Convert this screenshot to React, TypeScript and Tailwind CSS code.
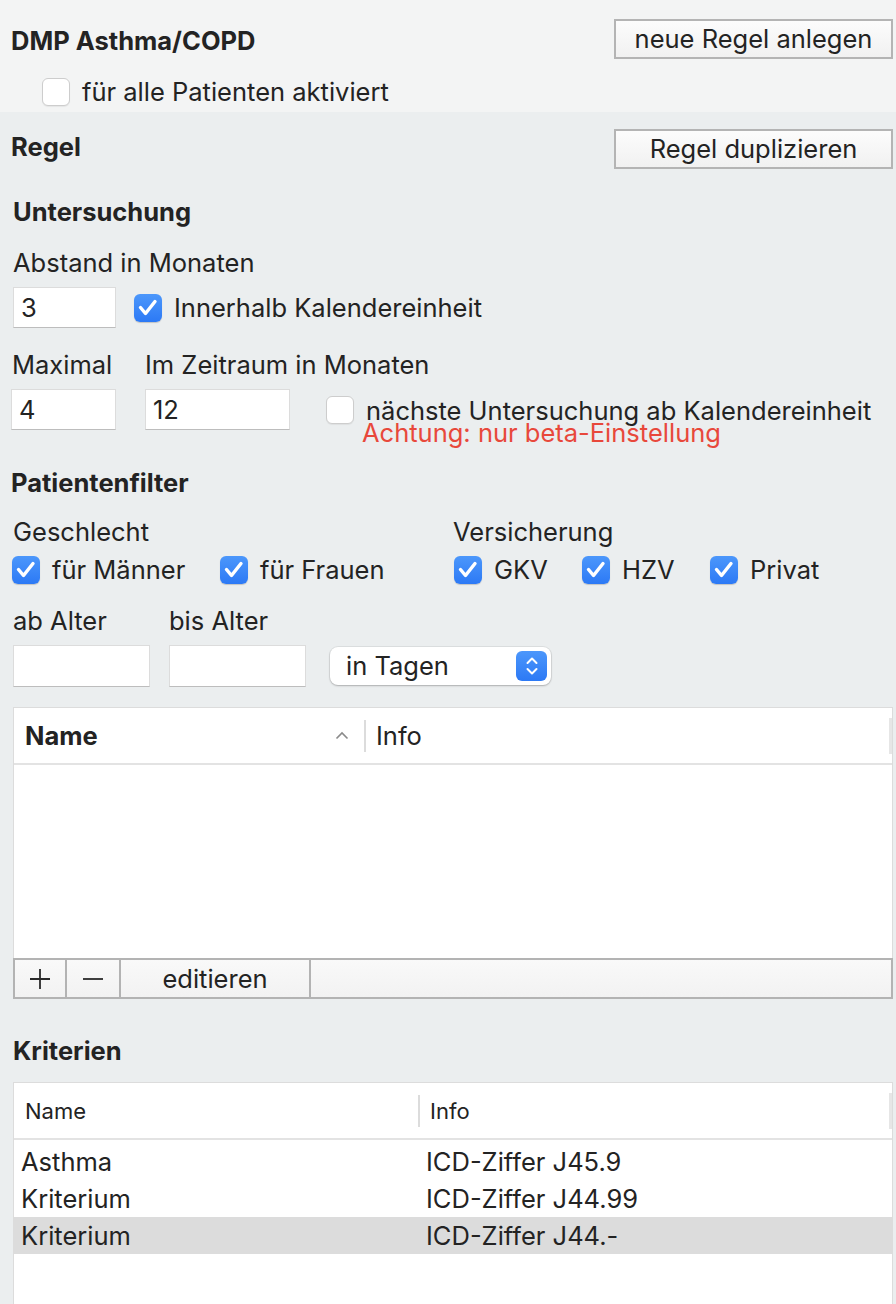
import React from 'react';

function Box({ checked }: { checked?: boolean }) {
  if (checked) {
    return (
      <span className="flex h-[28px] w-[28px] shrink-0 items-center justify-center rounded-[6px] bg-linear-to-b from-[#4c97fb] to-[#2c79f5] shadow-[0_1px_1px_rgba(0,0,0,0.18)]">
        <svg width="28" height="28" viewBox="0 0 28 28">
          <path d="M6.5 13.5 L11.5 19.5 L21 7.5" fill="none" stroke="white" strokeWidth="3.4" strokeLinecap="round" strokeLinejoin="round" />
        </svg>
      </span>
    );
  }
  return <span className="block h-[28px] w-[28px] shrink-0 rounded-[6px] border border-[#cdcdcd] bg-white shadow-[0_1px_1px_rgba(0,0,0,0.06)]" />;
}

function Btn({ children }: { children: React.ReactNode }) {
  return (
    <div className="flex h-[40px] w-[279px] items-center justify-center border-2 border-[#b4b4b4] bg-linear-to-b from-[#fcfcfc] to-[#f1f1f1]">
      {children}
    </div>
  );
}

function Check({ label }: { label: string }) {
  return (
    <div className="flex items-center gap-[12px]">
      <Box checked />
      <span>{label}</span>
    </div>
  );
}

const field = 'flex h-[41px] shrink-0 items-center border border-[#dcdcdc] border-b-[#bdbdbd] bg-white pl-[7px]';

export default function App() {
  return (
    <div className="h-[1304px] w-[896px] overflow-hidden bg-[#ebeeef] font-[Inter,'Noto_Sans',sans-serif] text-[25.5px] leading-[30px] text-[#232323]">
      {/* header */}
      <div className="h-[112px] bg-[#f3f4f4] pl-[11px] pr-[3px] pt-[19px]">
        <div className="flex h-[40px] items-center justify-between">
          <div className="mt-[4px] font-bold">DMP Asthma/COPD</div>
          <Btn>neue Regel anlegen</Btn>
        </div>
        <div className="ml-[31px] mt-[18px] flex items-center gap-[12px]">
          <Box />
          <span>für alle Patienten aktiviert</span>
        </div>
      </div>

      {/* Regel */}
      <div className="pl-[11px] pr-[3px] pt-[17px]">
        <div className="flex h-[40px] items-center justify-between">
          <div className="mb-[4px] font-bold">Regel</div>
          <Btn>Regel duplizieren</Btn>
        </div>
      </div>

      <div className="ml-[13px] mt-[28px] h-[30px] font-bold">Untersuchung</div>
      <div className="ml-[13px] mt-[21px] h-[30px]">Abstand in Monaten</div>
      <div className="ml-[13px] mt-[9px] flex h-[41px] items-center">
        <div className={field + ' w-[103px]'}>3</div>
        <div className="ml-[18px] flex items-center gap-[12px]">
          <Box checked />
          <span>Innerhalb Kalendereinheit</span>
        </div>
      </div>

      <div className="ml-[12px] mt-[22px] flex h-[30px]">
        <span className="w-[133px]">Maximal</span>
        <span>Im Zeitraum in Monaten</span>
      </div>
      <div className="ml-[11px] mt-[9px] flex h-[41px] items-start">
        <div className={field + ' w-[105px]'}>4</div>
        <div className={field + ' ml-[29px] w-[145px]'}>12</div>
        <div className="ml-[36px] mt-[7px] shrink-0">
          <Box />
        </div>
        <div className="ml-[12px] shrink-0 whitespace-nowrap pt-[9px]">
          <div className="h-[26px] leading-[26px]">nächste Untersuchung ab Kalendereinheit</div>
          <div className="-ml-[4px] h-[18px] leading-[18px] text-[#e8483b]">Achtung: nur beta-Einstellung</div>
        </div>
      </div>

      {/* Patientenfilter */}
      <div className="ml-[11px] mt-[38px] h-[30px] font-bold">Patientenfilter</div>
      <div className="ml-[13px] mt-[19px] flex h-[30px]">
        <span className="w-[440px]">Geschlecht</span>
        <span>Versicherung</span>
      </div>
      <div className="ml-[12px] mt-[9px] flex h-[28px] items-center">
        <div className="w-[208px]"><Check label="für Männer" /></div>
        <div className="w-[234px]"><Check label="für Frauen" /></div>
        <div className="w-[128px]"><Check label="GKV" /></div>
        <div className="w-[128px]"><Check label="HZV" /></div>
        <Check label="Privat" />
      </div>

      <div className="ml-[13px] mt-[22px] flex h-[30px]">
        <span className="w-[156px]">ab Alter</span>
        <span>bis Alter</span>
      </div>
      <div className="ml-[13px] mt-[9px] flex h-[42px] items-center">
        <div className="h-[42px] w-[137px] border border-[#dcdcdc] border-b-[#bdbdbd] bg-white" />
        <div className="ml-[19px] h-[42px] w-[137px] border border-[#dcdcdc] border-b-[#bdbdbd] bg-white" />
        <div className="ml-[24px] flex h-[38px] w-[221px] items-center justify-between rounded-[8px] bg-white pl-[16px] pr-[4px] shadow-[0_0_0_1px_rgba(0,0,0,0.06),0_1px_2px_rgba(0,0,0,0.22)]">
          <span>in Tagen</span>
          <span className="flex h-[30px] w-[31px] items-center justify-center rounded-[6px] bg-linear-to-b from-[#4c97fb] to-[#2c79f5]">
            <svg width="16" height="24" viewBox="0 0 16 24">
              <path d="M3.5 9 L8 4.5 L12.5 9 M3.5 15 L8 19.5 L12.5 15" fill="none" stroke="white" strokeWidth="2" strokeLinecap="round" strokeLinejoin="round" />
            </svg>
          </span>
        </div>
      </div>

      {/* table 1 */}
      <div className="ml-[13px] mt-[20px] h-[251px] w-[880px] border border-b-0 border-[#dcdcdc] bg-white">
        <div className="flex h-[57px] items-center border-b-2 border-[#e3e3e3]">
          <div className="flex w-[350px] items-center justify-between pl-[11px] pr-[15px] font-bold">
            <span>Name</span>
            <svg width="14" height="9" viewBox="0 0 14 9">
              <path d="M1.5 7.5 L7 2 L12.5 7.5" fill="none" stroke="#8a8a8a" strokeWidth="1.6" />
            </svg>
          </div>
          <div className="h-[32px] w-[2px] bg-[#dcdcdc]" />
          <div className="pl-[10px]">Info</div>
          <div className="ml-auto h-[36px] w-[3px] bg-[#e6e6e6]" />
        </div>
      </div>
      <div className="ml-[13px] flex h-[41px] w-[880px] border-2 border-[#b3b3b3] bg-linear-to-b from-[#f9f9f9] to-[#f2f2f2]">
        <div className="flex w-[52px] items-center justify-center border-r-2 border-[#b3b3b3]">
          <svg width="22" height="22" viewBox="0 0 22 22">
            <path d="M11 1 V21 M1 11 H21" stroke="#2a2a2a" strokeWidth="1.8" />
          </svg>
        </div>
        <div className="flex w-[54px] items-center justify-center border-r-2 border-[#b3b3b3]">
          <svg width="22" height="22" viewBox="0 0 22 22">
            <path d="M1 11 H21" stroke="#2a2a2a" strokeWidth="1.8" />
          </svg>
        </div>
        <div className="flex w-[190px] items-center justify-center border-r-2 border-[#b3b3b3]">editieren</div>
        <div className="flex-1" />
      </div>

      {/* Kriterien */}
      <div className="ml-[13px] mt-[37px] h-[30px] font-bold">Kriterien</div>
      <div className="ml-[13px] mt-[16px] h-[300px] w-[880px] border border-b-0 border-[#dcdcdc] bg-white">
        <div className="flex h-[57px] items-center border-b-2 border-[#e3e3e3]">
          <div className="w-[404px] pl-[11px] text-[22px]">Name</div>
          <div className="h-[32px] w-[2px] bg-[#dcdcdc]" />
          <div className="pl-[10px] text-[22px]">Info</div>
          <div className="ml-auto h-[36px] w-[3px] bg-[#e6e6e6]" />
        </div>
        <div className="pt-[3px]">
          {[
            ['Asthma', 'ICD-Ziffer J45.9', false],
            ['Kriterium', 'ICD-Ziffer J44.99', false],
            ['Kriterium', 'ICD-Ziffer J44.-', true],
          ].map(([name, info, sel], i) => (
            <div key={i} className={`flex h-[37px] items-center pl-[7px] ${sel ? 'bg-[#dcdcdc]' : ''}`}>
              <span className="w-[405px]">{name}</span>
              <span>{info}</span>
            </div>
          ))}
        </div>
      </div>
    </div>
  );
}
